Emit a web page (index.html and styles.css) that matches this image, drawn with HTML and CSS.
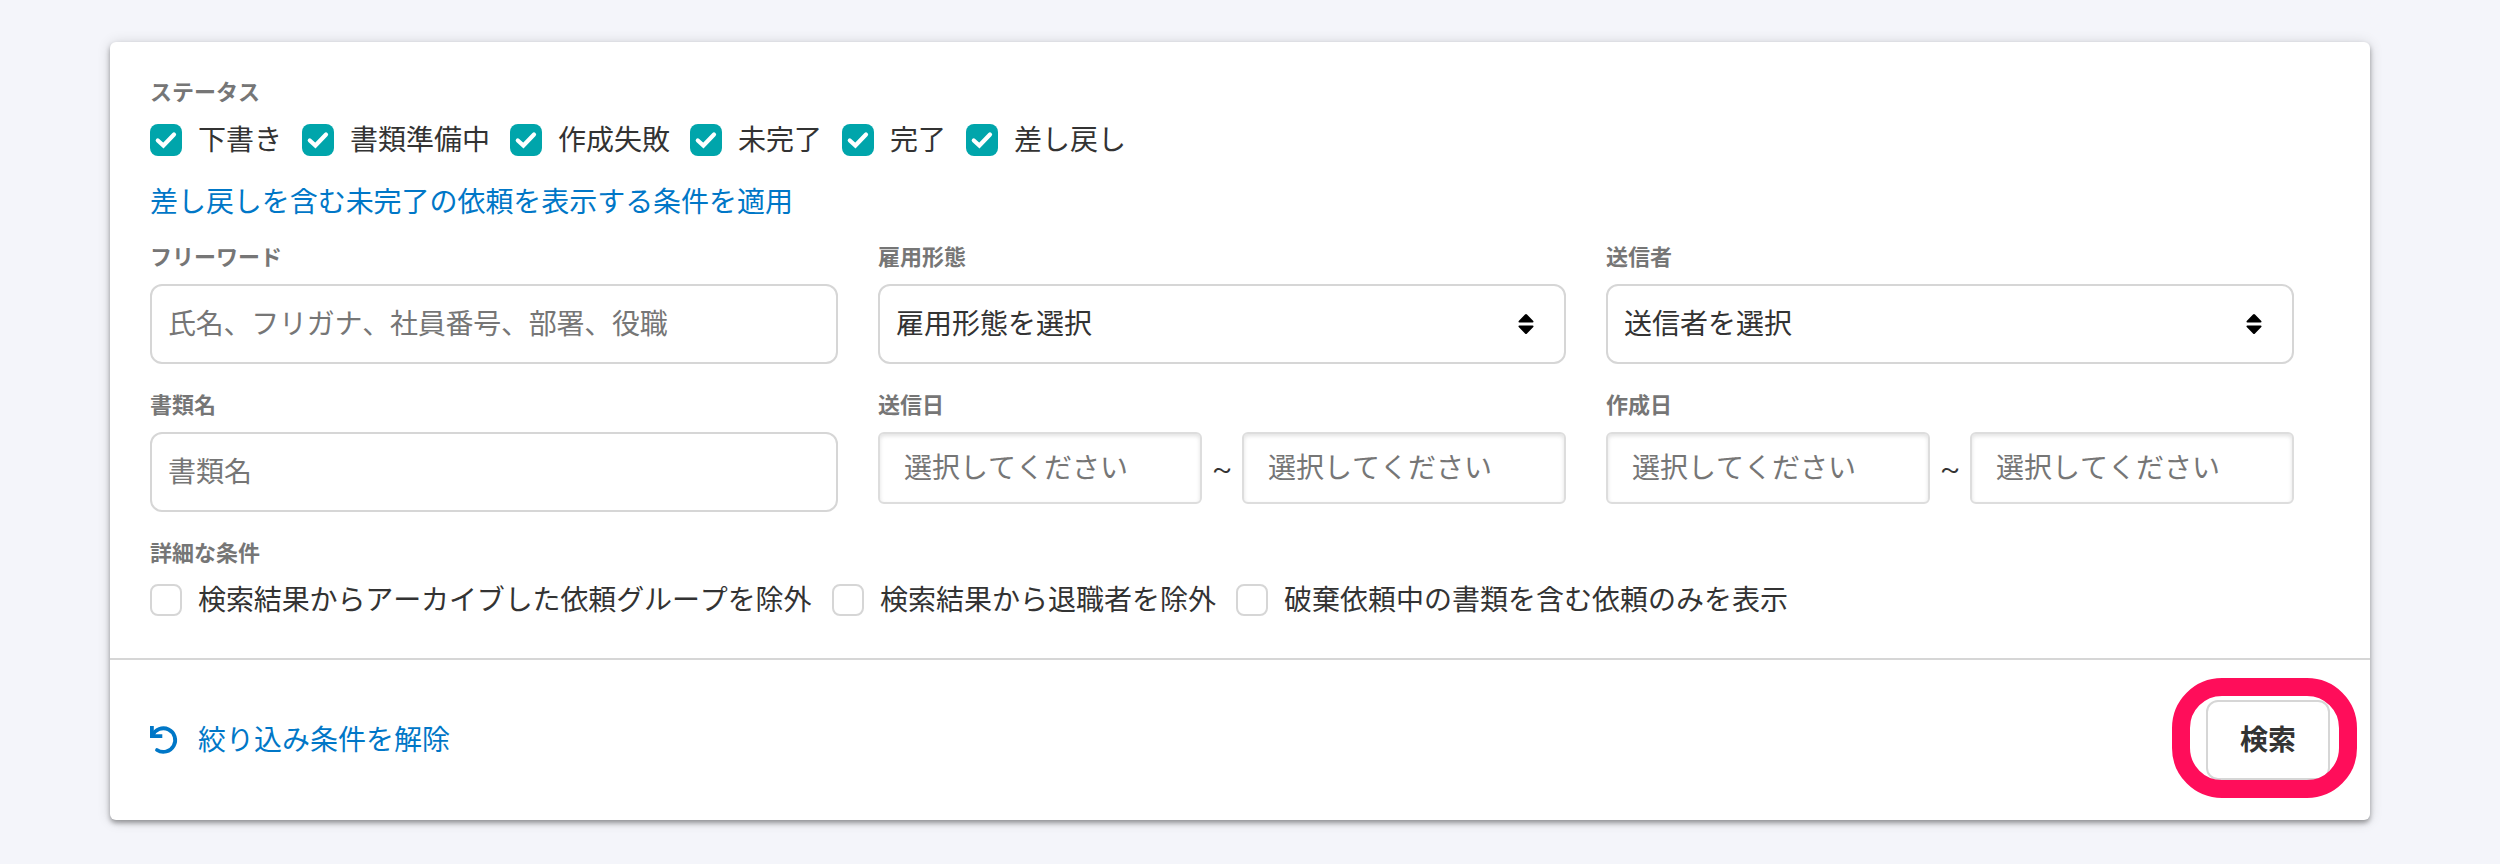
FILE: index.html
```html
<!DOCTYPE html>
<html lang="ja">
<head>
<meta charset="utf-8">
<title>検索条件</title>
<link rel="stylesheet" href="styles.css">
</head>
<body>
<svg class="defs" width="0" height="0">
  <symbol id="check" viewBox="0 0 32 32"><path d="M7.800 16.500 13.400 21.500 24 10.500" fill="none" stroke="#fff" stroke-width="4.200" stroke-linecap="round" stroke-linejoin="miter"/></symbol>
  <symbol id="sort" viewBox="0 0 16 20"><path d="M7 .600Q8-.400 9 .600L15.300 7Q16 8.500 14.600 8.500H1.400Q0 8.500 .700 7ZM7 19.400Q8 20.400 9 19.400L15.300 13Q16 11.500 14.600 11.500H1.400Q0 11.500 .700 13Z"/></symbol>
</svg>
<form class="card">
  <div class="conditions">
    <div class="label">ステータス</div>
    <div class="checks">
      <label class="check"><span class="box on"><svg><use href="#check"/></svg></span><span class="text">下書き</span></label>
      <label class="check"><span class="box on"><svg><use href="#check"/></svg></span><span class="text">書類準備中</span></label>
      <label class="check"><span class="box on"><svg><use href="#check"/></svg></span><span class="text">作成失敗</span></label>
      <label class="check"><span class="box on"><svg><use href="#check"/></svg></span><span class="text">未完了</span></label>
      <label class="check"><span class="box on"><svg><use href="#check"/></svg></span><span class="text">完了</span></label>
      <label class="check"><span class="box on"><svg><use href="#check"/></svg></span><span class="text">差し戻し</span></label>
    </div>
    <a class="link preset">差し戻しを含む未完了の依頼を表示する条件を適用</a>
    <div class="grid">
      <div class="field"><div class="label">フリーワード</div><div class="input hint keywords">氏名、フリガナ、社員番号、部署、役職</div></div>
      <div class="field"><div class="label">雇用形態</div><div class="input select">雇用形態を選択<svg class="sort"><use href="#sort"/></svg></div></div>
      <div class="field"><div class="label">送信者</div><div class="input select">送信者を選択<svg class="sort"><use href="#sort"/></svg></div></div>
      <div class="field"><div class="label">書類名</div><div class="input hint">書類名</div></div>
      <div class="field"><div class="label">送信日</div><div class="range"><div class="date">選択してください</div><span class="tilde">~</span><div class="date">選択してください</div></div></div>
      <div class="field"><div class="label">作成日</div><div class="range"><div class="date">選択してください</div><span class="tilde">~</span><div class="date">選択してください</div></div></div>
    </div>
    <div class="label">詳細な条件</div>
    <div class="checks details">
      <label class="check archive"><span class="box"></span><span class="text">検索結果からアーカイブした依頼グループを除外</span></label>
      <label class="check"><span class="box"></span><span class="text">検索結果から退職者を除外</span></label>
      <label class="check"><span class="box"></span><span class="text">破棄依頼中の書類を含む依頼のみを表示</span></label>
    </div>
  </div>
  <div class="footer">
    <a class="link reset"><svg class="undo" viewBox="0 0 28 28" fill="none" stroke="#0077c7" stroke-width="3.800"><path d="M1.900 0V10.100H12.300"/><path d="M2.500 9.500A11.800 11.800 0 1 1 7 24" stroke-linecap="round"/></svg><span class="text">絞り込み条件を解除</span></a>
    <div class="submit"><span class="button">検索</span><span class="ring"></span></div>
  </div>
</form>
</body>
</html>
```
FILE: styles.css
```css
* { box-sizing: border-box; }
body {
  margin: 0;
  padding: 42px 130px 44px 110px;
  background: #f4f5fa;
  color: #333;
  font: 28px/40px "Noto Sans CJK JP", sans-serif;
  font-kerning: none;
}
.defs { position: absolute; }
.card {
  height: 778px;
  background: #fff;
  border-radius: 6px;
  box-shadow: 0 3px 5px rgba(3, 3, 2, .35), 0 1px 14px rgba(3, 3, 2, .14);
}
.conditions {
  height: 618px;
  padding: 33px 40px 0;
  border-bottom: 2px solid #d6d6d6;
}
.label {
  height: 32px;
  font-size: 22px;
  line-height: 31px;
  font-weight: 700;
  color: #767676;
}
.checks { display: flex; gap: 20px; margin-top: 13px; height: 40px; }
.details { margin-top: 12px; }
.check { display: flex; align-items: center; gap: 16px; white-space: nowrap; }
.text { padding-bottom: 4px; }
.archive { width: 662px; letter-spacing: -.12px; }
.box {
  flex: none;
  width: 32px;
  height: 32px;
  border: 2px solid #d6d6d6;
  border-radius: 8px;
  background: #fff;
}
.box.on { border: 0; background: #00a5ab; }
.box svg { display: block; width: 32px; height: 32px; }
.link { color: #0077c7; }
.preset { display: block; margin-top: 20px; letter-spacing: -.05px; }
.grid {
  display: grid;
  grid-template-columns: repeat(3, 688px);
  grid-template-rows: 148px 148px;
  column-gap: 40px;
  margin-top: 20px;
}
.input {
  display: flex;
  align-items: center;
  height: 80px;
  margin-top: 12px;
  padding: 0 30px 4px 16px;
  border: 2px solid #d6d6d6;
  border-radius: 12px;
}
.hint { color: #767676; }
.keywords { letter-spacing: -.25px; }
.select { justify-content: space-between; }
.sort { width: 16px; height: 20px; position: relative; top: 2px; }
.range { display: flex; align-items: center; margin-top: 12px; }
.date {
  width: 324px;
  height: 72px;
  padding: 0 24px;
  line-height: 64px;
  color: #767676;
  border: 2px solid #ddd;
  border-radius: 6px;
  box-shadow: inset 0 2px 4px rgba(0, 0, 0, .12);
}
.tilde {
  width: 40px;
  text-align: center;
  font-family: Inter, sans-serif;
  font-size: 34px;
  font-weight: 300;
}
.footer {
  display: flex;
  align-items: center;
  justify-content: space-between;
  height: 160px;
  padding: 0 40px;
}
.reset { display: flex; align-items: center; gap: 20px; }
.undo { width: 28px; height: 28px; overflow: visible; }
.submit { position: relative; }
.button {
  display: block;
  width: 124px;
  height: 80px;
  line-height: 73px;
  text-align: center;
  font-weight: 700;
  border: 2px solid #d6d6d6;
  border-radius: 12px;
}
.ring {
  position: absolute;
  left: -34px;
  top: -22px;
  width: 185px;
  height: 120px;
  border: 18px solid #ff0d5a;
  border-radius: 50px;
}
```
